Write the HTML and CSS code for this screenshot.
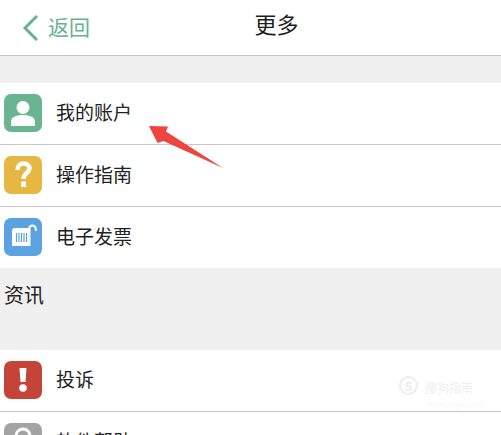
FILE: index.html
```html
<!DOCTYPE html>
<html lang="zh">
<head>
    <meta charset="UTF-8">
    <meta name="viewport" content="width=device-width, initial-scale=1">
    <title>更多</title>
    <link rel="stylesheet" href="styles.css">
</head>
<body>
    <div class="page">
        <header class="top-bar">
            <a class="back">
                <svg class="back-arrow" width="18" height="28" viewBox="0 0 18 28">
                    <path d="M17 2 L5 14 L17 26" fill="none" stroke="#69b18f" stroke-width="3"/>
                </svg>
                <span class="back-text">返回</span>
            </a>
            <h1>更多</h1>
        </header>

        <div class="gap"></div>

        <ul class="list">
            <li>
                <span class="icon green">
                    <svg width="38" height="38" viewBox="0 0 38 38">
                        <circle cx="19" cy="13.500" r="6.500" fill="#fff"/>
                        <path d="M7 32 V28 C7 23 12 21 19 21 C26 21 31 23 31 28 V32 Z" fill="#fff"/>
                    </svg>
                </span>
                <span class="label">我的账户</span>
            </li>
            <li>
                <span class="icon yellow">
                    <svg width="38" height="38" viewBox="0 0 38 38">
                        <path d="M13.500 14 C13.500 9.500 16.500 7.500 19.500 7.500 C23 7.500 25.500 9.500 25.500 12.500 C25.500 17 19.500 17 19.500 23" fill="none" stroke="#fff" stroke-width="4.500"/>
                        <rect x="17" y="25.500" width="5" height="5.500" fill="#fff"/>
                    </svg>
                </span>
                <span class="label">操作指南</span>
            </li>
            <li>
                <span class="icon blue">
                    <svg width="38" height="38" viewBox="0 0 38 38">
                        <path d="M8 13 Q8 10 11 10 H26.500 V28 H8 Z" fill="#fff"/>
                        <path d="M25 11 Q25.500 7.500 28.500 7.500 Q32 7.500 32 13" fill="none" stroke="#fff" stroke-width="2"/>
                        <path d="M12.500 15 V24 M15 15 V24 M17.500 15 V24 M20 15 V24 M22.500 15 V24" stroke="#5ba3e0" stroke-width="1.200"/>
                    </svg>
                </span>
                <span class="label">电子发票</span>
            </li>
        </ul>

        <div class="section-title">资讯</div>

        <ul class="list">
            <li>
                <span class="icon red">
                    <svg width="38" height="38" viewBox="0 0 38 38">
                        <path d="M15.500 7 H22.500 L21.500 21 H16.500 Z" fill="#fff"/>
                        <circle cx="19" cy="27" r="3.800" fill="#fff"/>
                    </svg>
                </span>
                <span class="label">投诉</span>
            </li>
            <li>
                <span class="icon gray">
                    <svg width="38" height="38" viewBox="0 0 38 38">
                        <circle cx="19" cy="13" r="7" fill="none" stroke="#fff" stroke-width="3"/>
                    </svg>
                </span>
                <span class="label">软件帮助</span>
            </li>
        </ul>

        <svg class="arrow" width="80" height="56" viewBox="0 0 80 56">
            <path d="M1 2 L20 2.500 L18 7.500 L75 44 L15.500 17 L9.500 19 Z" fill="#ee4540"/>
        </svg>

        <div class="watermark">
            <span class="mark-s">S</span>
            <div class="mark-text">
                <div class="mark-name">搜狗指南</div>
                <div class="mark-url">zhinan.sogou.com</div>
            </div>
        </div>
    </div>
</body>
</html>
```

FILE: styles.css
```css
* {
    box-sizing: border-box;
}
html, body {
    margin: 0;
    height: 100%;
    overflow: hidden;
}
body {
    font-family: "Noto Sans CJK SC", "Liberation Sans", sans-serif;
    color: #222;
    background: #f0f0f0;
}
.page {
    position: relative;
    height: 435px;
}
.top-bar {
    position: relative;
    display: flex;
    align-items: center;
    justify-content: center;
    height: 56px;
    padding-left: 52px;
    background: #fff;
    border-bottom: 1px solid #c4c4c4;
}
.top-bar h1 {
    margin: 0 0 9px;
    font-size: 22px;
    font-weight: 400;
    color: #1c1c1c;
}
.back {
    position: absolute;
    left: 20px;
    top: 11px;
    display: flex;
    align-items: center;
    gap: 10px;
    font-size: 21px;
    color: #69b18f;
}
.back-text {
    margin-bottom: 3px;
}
.gap {
    height: 27px;
}
.list {
    margin: 0;
    padding: 0;
    list-style: none;
}
.list li {
    display: flex;
    align-items: center;
    gap: 14px;
    height: 62px;
    padding: 0 4px 1px;
    font-size: 19px;
    background: #fff;
    border-bottom: 1px solid #c8c8c8;
}
.list li:nth-child(3) {
    height: 61px;
    border-bottom: 0;
}
.label {
    margin-bottom: 4px;
}
.icon {
    flex: none;
    width: 38px;
    height: 38px;
    border-radius: 7px;
}
.icon svg {
    display: block;
}
.green {
    background: #69b592;
}
.yellow {
    background: #e6b843;
}
.blue {
    background: #5ba3e0;
}
.red {
    background: #c5443a;
}
.gray {
    background: #a3a3a3;
}
.section-title {
    height: 82px;
    padding: 13px 4px 0;
    font-size: 20px;
    line-height: 28px;
    color: #222;
}
.arrow {
    position: absolute;
    left: 148px;
    top: 124px;
}
.watermark {
    position: absolute;
    left: 399px;
    top: 376px;
    display: flex;
    gap: 7px;
    opacity: 0.7;
}
.mark-s {
    width: 19px;
    height: 19px;
    border: 2px solid #e8e8e8;
    border-radius: 50%;
    font-size: 12px;
    line-height: 15px;
    font-weight: 700;
    text-align: center;
    color: #e4e4e4;
}
.mark-text {
    display: flex;
    flex-direction: column;
    gap: 5px;
    padding-top: 5px;
}
.mark-name {
    font-size: 12px;
    line-height: 14px;
    color: #e8e8e8;
}
.mark-url {
    font-size: 7px;
    line-height: 8px;
    color: #f4f4f4;
}
```
